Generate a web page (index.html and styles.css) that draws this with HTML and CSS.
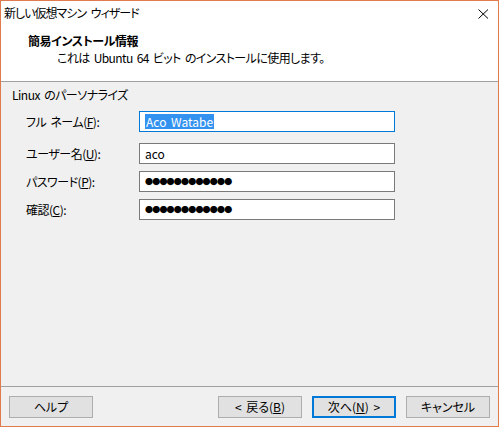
FILE: index.html
```html
<!DOCTYPE html>
<html lang="ja">
<head>
  <meta charset="UTF-8" />
  <title>新しい仮想マシン ウィザード</title>
  <link rel="stylesheet" href="styles.css">
</head>
<body>
  <div class="window">
    <!-- タイトルバー -->
    <div class="titlebar">
      <span class="title">新しい仮想マシン ウィザード</span>
      <svg class="close" width="11" height="10" viewBox="0 0 11 10">
        <path d="M0.5 0.5 L10 9.5 M10 0.5 L0.5 9.5" stroke="#000" stroke-width="1" fill="none"/>
      </svg>
    </div>

    <!-- ヘッダー -->
    <div class="header">
      <div class="head-title">簡易インストール情報</div>
      <div class="head-sub">これは Ubuntu 64 ビット のインストールに使用します。</div>
    </div>

    <!-- 本文 -->
    <div class="content">
      <div class="group-label">Linux のパーソナライズ</div>

      <div class="field first">
        <label class="field-label">フル ネーム(<u>F</u>):</label>
        <div class="textbox focused"><span class="selected">Aco Watabe</span></div>
      </div>
      <div class="field">
        <label class="field-label">ユーザー名(<u>U</u>):</label>
        <div class="textbox">aco</div>
      </div>
      <div class="field">
        <label class="field-label">パスワード(<u>P</u>):</label>
        <div class="textbox dots">●●●●●●●●●●●●</div>
      </div>
      <div class="field">
        <label class="field-label">確認(<u>C</u>):</label>
        <div class="textbox dots">●●●●●●●●●●●●</div>
      </div>
    </div>

    <!-- ボタン -->
    <div class="footer">
      <button class="btn">ヘルプ</button>
      <div class="spacer"></div>
      <button class="btn">&lt; 戻る(<u>B</u>)</button>
      <button class="btn default">次へ(<u>N</u>) &gt;</button>
      <button class="btn">キャンセル</button>
    </div>
  </div>
</body>
</html>
```

FILE: styles.css
```css
:root {
  --accent: #0078d7;
  --face: #f0f0f0;
  --frame: #e27a50;
  --line: #a0a0a0;
}

* {
  box-sizing: border-box;
}

body {
  margin: 0;
  font-family: "Noto Sans CJK JP", "Noto Sans", sans-serif;
  font-size: 12px;
  font-feature-settings: "palt" 1;
  color: #000;
}

.window {
  width: 499px;
  height: 427px;
  border: 1px solid var(--frame);
  display: flex;
  flex-direction: column;
  background-color: var(--face);
}

.titlebar {
  height: 29px;
  background-color: #fff;
  display: flex;
  justify-content: space-between;
  align-items: flex-start;
  padding: 4px 9px 0 3px;
}

.title {
  line-height: 16px;
  letter-spacing: -1px;
  word-spacing: 3px;
}

.close {
  margin-top: 4px;
}

.header {
  height: 52px;
  background-color: #fff;
  border-bottom: 1px solid var(--line);
  padding: 2px 0 0 27px;
}

.head-title {
  font-weight: bold;
  line-height: 17px;
  letter-spacing: -0.4px;
}

.head-sub {
  line-height: 17px;
  padding-left: 29px;
  letter-spacing: -0.6px;
  word-spacing: 2px;
}

.content {
  flex: 1;
  padding: 5px 0 0 11px;
}

.group-label {
  line-height: 16px;
  letter-spacing: -0.5px;
  word-spacing: 2px;
}

.field {
  display: flex;
  align-items: center;
  margin-top: 7px;
}

.field.first {
  margin-top: 8px;
}

.field + .field:nth-child(3) {
  margin-top: 11px;
}

.field-label {
  width: 127px;
  padding-left: 14px;
  letter-spacing: -0.5px;
  word-spacing: 2px;
}

.textbox {
  width: 256px;
  height: 21px;
  background-color: #fff;
  border: 1px solid #7a7a7a;
  padding: 0 0 0 5px;
  line-height: 19px;
  white-space: nowrap;
  word-spacing: 2px;
}

.textbox.focused {
  border-color: var(--accent);
}

.selected {
  background-color: #3392f0;
  color: #fff;
  display: inline-block;
  line-height: 15px;
  padding: 0 1px;
}

.dots {
  font-size: 8px;
  letter-spacing: -0.8px;
  line-height: 19px;
}

.footer {
  border-top: 1px solid var(--line);
  padding: 9px 8px 0 8px;
  height: 40px;
  display: flex;
  gap: 10px;
}

.spacer {
  flex: 1;
}

.btn {
  width: 84px;
  height: 22px;
  font-family: inherit;
  font-size: 12px;
  font-feature-settings: "palt" 1;
  word-spacing: 2px;
  background-color: #e1e1e1;
  border: 1px solid #adadad;
  padding: 0;
  color: #000;
  line-height: 18px;
}

.btn.default {
  border: 2px solid var(--accent);
}
```
